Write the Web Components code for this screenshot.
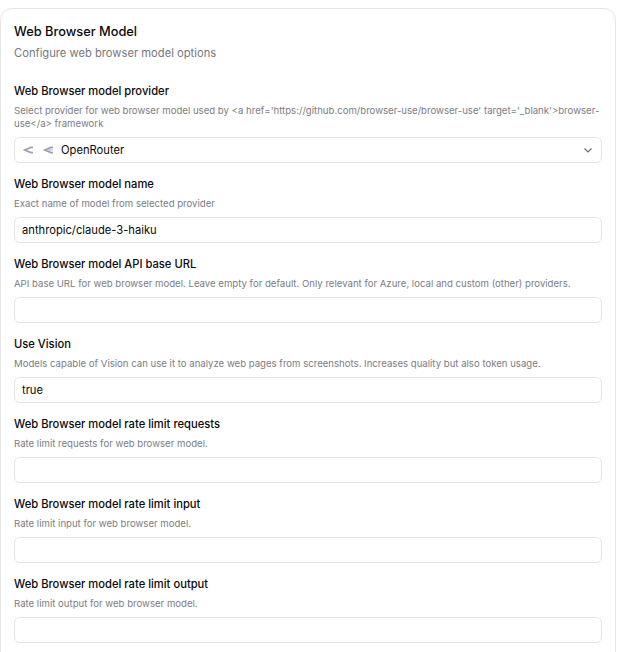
<!DOCTYPE html>
<html>
<head>
<meta charset="utf-8">
<style>
  html, body { margin: 0; padding: 0; background: #fff; height: 652px; overflow: hidden; }
  body { font-family: Inter, "Noto Sans", sans-serif; }
</style>
</head>
<body>
<settings-card heading="Web Browser Model" subtitle="Configure web browser model options">
  <setting-field label="Web Browser model provider" hint="Select provider for web browser model used by &lt;a href='https://github.com/browser-use/browser-use' target='_blank'&gt;browser-use&lt;/a&gt; framework">
    <provider-select value="OpenRouter"></provider-select>
  </setting-field>
  <setting-field label="Web Browser model name" hint="Exact name of model from selected provider">
    <text-box value="anthropic/claude-3-haiku"></text-box>
  </setting-field>
  <setting-field label="Web Browser model API base URL" hint="API base URL for web browser model. Leave empty for default. Only relevant for Azure, local and custom (other) providers.">
    <text-box></text-box>
  </setting-field>
  <setting-field label="Use Vision" hint="Models capable of Vision can use it to analyze web pages from screenshots. Increases quality but also token usage.">
    <text-box value="true"></text-box>
  </setting-field>
  <setting-field label="Web Browser model rate limit requests" hint="Rate limit requests for web browser model.">
    <text-box></text-box>
  </setting-field>
  <setting-field label="Web Browser model rate limit input" hint="Rate limit input for web browser model.">
    <text-box></text-box>
  </setting-field>
  <setting-field label="Web Browser model rate limit output" hint="Rate limit output for web browser model.">
    <text-box></text-box>
  </setting-field>
</settings-card>

<script>
// Card with a heading block and a column of fields
class SettingsCard extends HTMLElement {
  constructor() {
    super();
    this.attachShadow({ mode: 'open' });
  }

  connectedCallback() {
    this.shadowRoot.innerHTML = `
      <style>
        :host {
          display: block;
          box-sizing: border-box;
          width: 616px;
          margin-top: 8px;
          padding: 15px 13px 40px 13px;
          border: 1px solid #e6e6e9;
          border-radius: 12px;
          background: #fff;
        }
        h2 {
          margin: 0;
          font-size: 12.8px;
          line-height: 16px;
          font-weight: 500;
          color: #09090b;
        }
        p {
          margin: 5px 0 0;
          font-size: 11.2px;
          line-height: 16px;
          color: #77777f;
        }
        .fields {
          display: flex;
          flex-direction: column;
          gap: 13px;
          margin-top: 22.2px;
        }
      </style>
      <h2>${this.getAttribute('heading')}</h2>
      <p>${this.getAttribute('subtitle')}</p>
      <div class="fields"><slot></slot></div>
    `;
  }
}

// Label, hint line and whatever control is slotted in
class SettingField extends HTMLElement {
  constructor() {
    super();
    this.attachShadow({ mode: 'open' });
  }

  connectedCallback() {
    this.shadowRoot.innerHTML = `
      <style>
        :host {
          display: block;
        }
        .label {
          font-size: 11.2px;
          line-height: 16px;
          font-weight: 500;
          color: #09090b;
        }
        .hint {
          margin: 6px 0 6.2px;
          font-size: 9.6px;
          line-height: 12.8px;
          color: #7c7c85;
        }
      </style>
      <div class="label"></div>
      <div class="hint"></div>
      <slot></slot>
    `;
    this.shadowRoot.querySelector('.label').textContent = this.getAttribute('label');
    this.shadowRoot.querySelector('.hint').textContent = this.getAttribute('hint');
  }
}

const controlStyles = `
  :host {
    display: flex;
    align-items: center;
    box-sizing: border-box;
    height: 26px;
    padding: 0 7px;
    border: 1px solid #e4e4e7;
    border-radius: 6px;
    background: #fff;
    font-size: 11.2px;
    line-height: 16px;
    color: #09090b;
  }
`;

class TextBox extends HTMLElement {
  constructor() {
    super();
    this.attachShadow({ mode: 'open' });
  }

  connectedCallback() {
    this.shadowRoot.innerHTML = `
      <style>${controlStyles}</style>
      <span>${this.getAttribute('value') || ''}</span>
    `;
  }
}

// Select with the provider logo on the left and a chevron on the right
class ProviderSelect extends HTMLElement {
  constructor() {
    super();
    this.attachShadow({ mode: 'open' });
  }

  connectedCallback() {
    this.shadowRoot.innerHTML = `
      <style>
        ${controlStyles}
        :host { padding: 0 8px 0 8px; }
        .logo { flex: none; display: block; margin-right: 8px; }
        .value { flex: 1; margin-top: 1px; }
        .chevron { flex: none; display: block; margin-top: 1px; }
      </style>
      <svg class="logo" width="30" height="10" viewBox="0 0 30 10" fill="none">
        <path d="M10 2.4 H8 L1.8 5 L8 7.6 H10" stroke="#9aa0b5" stroke-width="1.7"/>
        <path d="M30 2.4 H28 L21.8 5 L28 7.6 H30" stroke="#9aa0b5" stroke-width="1.7"/>
        <path d="M29.5 5 H24" stroke="#b4b9ca" stroke-width="1.2"/>
      </svg>
      <span class="value">${this.getAttribute('value')}</span>
      <svg class="chevron" width="10" height="10" viewBox="0 0 10 10" fill="none">
        <path d="M1.5 3.5 L5 7 L8.5 3.5" stroke="#6b6b73" stroke-width="1.1"/>
      </svg>
    `;
  }
}

customElements.define('settings-card', SettingsCard);
customElements.define('setting-field', SettingField);
customElements.define('text-box', TextBox);
customElements.define('provider-select', ProviderSelect);
</script>
</body>
</html>
